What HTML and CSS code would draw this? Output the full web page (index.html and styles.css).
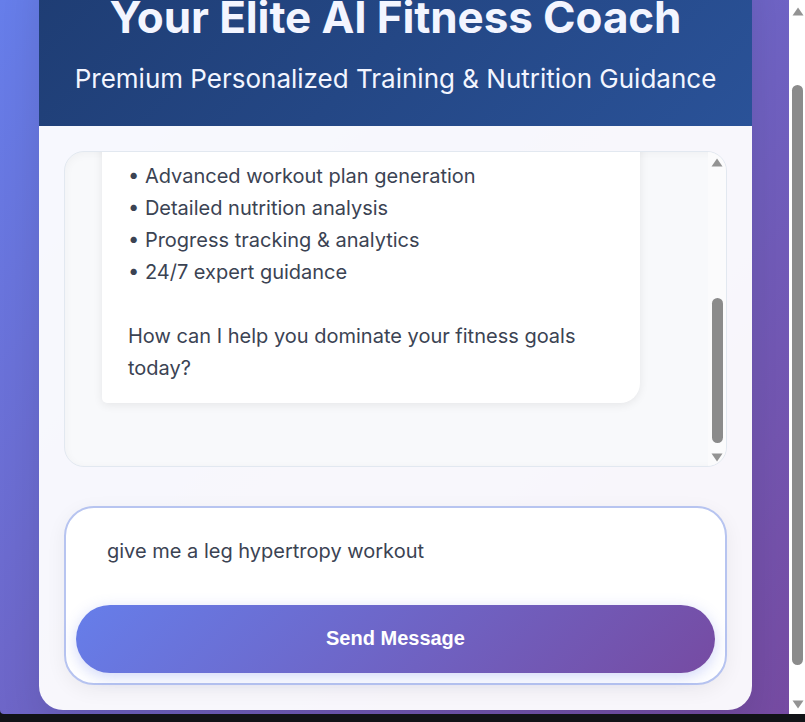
FILE: index.html
```html
<!DOCTYPE html>
<html lang="en">
<head>
<meta charset="utf-8">
<title>Elite AI Fitness Coach</title>
<link rel="stylesheet" href="styles.css">
</head>
<body>
<div class="window">
  <div class="viewport" id="viewport">
    <div class="card">
      <header class="header">
        <h1 class="title">Your Elite AI Fitness Coach</h1>
        <p class="subtitle">Premium Personalized Training &amp; Nutrition Guidance</p>
      </header>
      <main class="body">
        <section class="chat">
          <div class="messages" id="messages">
            <div class="bubble">
              <p>Welcome to your Elite AI Fitness Coach!</p>
              <p class="gap">I'm your premium personal trainer, here to help you build strength. What I offer:</p>
              <p class="gap">• Advanced workout plan generation</p>
              <p>• Detailed nutrition analysis</p>
              <p>• Progress tracking &amp; analytics</p>
              <p>• 24/7 expert guidance</p>
              <p class="gap">How can I help you dominate your fitness goals today?</p>
            </div>
          </div>
          <div class="scrollbar chat-scrollbar" aria-hidden="true">
            <svg class="arrow" width="12" height="9" viewBox="0 0 12 9"><path d="M6 0.5 L11.5 8.5 L0.5 8.5 Z"/></svg>
            <div class="thumb" style="margin-top:131px;height:145px"></div>
            <svg class="arrow down" width="12" height="9" viewBox="0 0 12 9"><path d="M0.5 0.5 L11.5 0.5 L6 8.5 Z"/></svg>
          </div>
        </section>
        <form class="composer">
          <textarea class="input">give me a leg hypertropy workout</textarea>
          <button type="button" class="send">Send Message</button>
        </form>
      </main>
    </div>
  </div>
  <div class="scrollbar page-scrollbar" aria-hidden="true">
    <svg class="arrow" width="12" height="9" viewBox="0 0 12 9"><path d="M6 0.5 L11.5 8.5 L0.5 8.5 Z"/></svg>
    <div class="thumb" style="margin-top:69px;height:580px"></div>
    <svg class="arrow down" width="12" height="9" viewBox="0 0 12 9"><path d="M0.5 0.5 L11.5 0.5 L6 8.5 Z"/></svg>
  </div>
</div>
<script src="script.js"></script>
</body>
</html>
```
FILE: styles.css
```css
html, body {
  margin: 0;
  padding: 0;
  background: #111317;
}
body {
  font-family: "Inter", "Noto Sans", sans-serif;
}
.window {
  display: flex;
  height: 714px;
  border-radius: 0 0 0 4px;
  overflow: hidden;
}
.viewport {
  flex: 1;
  min-width: 0;
  overflow: hidden;
  background: linear-gradient(135deg, #667eea 0%, #764ba2 100%);
  box-sizing: border-box;
  padding: 20px 0 46px 2px;
}
.scrollbar {
  display: flex;
  flex-direction: column;
  align-items: center;
  box-sizing: border-box;
}
.scrollbar .arrow {
  display: block;
  fill: #939393;
  flex: none;
}
.scrollbar .thumb {
  flex: none;
  width: 11px;
  border-radius: 6px;
  background: #8b8b8b;
}
.scrollbar .arrow.down {
  margin-top: auto;
}
.page-scrollbar {
  width: 16px;
  flex: none;
  background: #ffffff;
  padding: 7px 0 5px 1px;
}
.card {
  width: 713px;
  margin: 0 auto;
  background: rgba(255, 255, 255, 0.95);
  border-radius: 24px;
  overflow: hidden;
  box-shadow: 0 20px 40px rgba(0, 0, 0, 0.1);
}
.header {
  background: linear-gradient(135deg, #1e3c72 0%, #2a5298 100%);
  color: #f3f5ff;
  text-align: center;
  padding: 40px 20px 30px;
}
.title {
  margin: 0 0 18px;
  font-size: 44px;
  font-weight: 700;
  line-height: 1.2;
  letter-spacing: -0.1px;
}
.subtitle {
  margin: 0;
  font-size: 26px;
  line-height: 1.3;
  font-weight: 400;
}
.body {
  padding: 25px;
  display: flex;
  flex-direction: column;
  gap: 39px;
}
.chat {
  height: 316px;
  box-sizing: border-box;
  display: flex;
  background: #f8f9fb;
  border: 1px solid #e2e8f0;
  border-radius: 20px;
  box-shadow: inset 0 2px 10px rgba(0, 0, 0, 0.04);
  overflow: hidden;
}
.messages {
  flex: 1;
  min-width: 0;
  overflow: hidden;
  padding: 25px 0 63px 37px;
}
.chat-scrollbar {
  width: 18px;
  flex: none;
  background: #fbfbfc;
  padding: 6px 0 4px;
}
.bubble {
  width: 538px;
  box-sizing: border-box;
  background: #ffffff;
  border-radius: 20px 20px 20px 5px;
  box-shadow: 0 2px 10px rgba(0, 0, 0, 0.08);
  padding: 16px 25px 19px 26px;
  color: #3b4353;
  font-size: 20px;
  line-height: 32px;
}
.bubble p {
  margin: 0;
}
.bubble p.gap {
  margin-top: 32px;
}
.composer {
  margin: 0;
  background: #ffffff;
  border: 2px solid #b7c4f0;
  border-radius: 30px;
  padding: 10px;
  display: flex;
  flex-direction: column;
  gap: 10px;
  box-shadow: 0 5px 20px rgba(0, 0, 0, 0.06);
}
.input {
  display: block;
  height: 77px;
  box-sizing: border-box;
  border: none;
  outline: none;
  resize: none;
  background: #ffffff;
  padding: 18px 31px 0;
  font-family: "Inter", "Noto Sans", sans-serif;
  font-size: 20px;
  line-height: 30px;
  color: #3b4353;
}
.send {
  height: 68px;
  border: none;
  border-radius: 34px;
  background: linear-gradient(135deg, #667eea 0%, #764ba2 100%);
  color: #ffffff;
  font-family: "Liberation Sans", Arial, sans-serif;
  font-weight: 700;
  font-size: 20px;
  box-shadow: 0 4px 15px rgba(102, 126, 234, 0.3);
}
```
FILE: script.js
```js
var vp = document.getElementById('viewport');
vp.scrollTop = 69;
var msgs = document.getElementById('messages');
msgs.scrollTop = msgs.scrollHeight;
```
